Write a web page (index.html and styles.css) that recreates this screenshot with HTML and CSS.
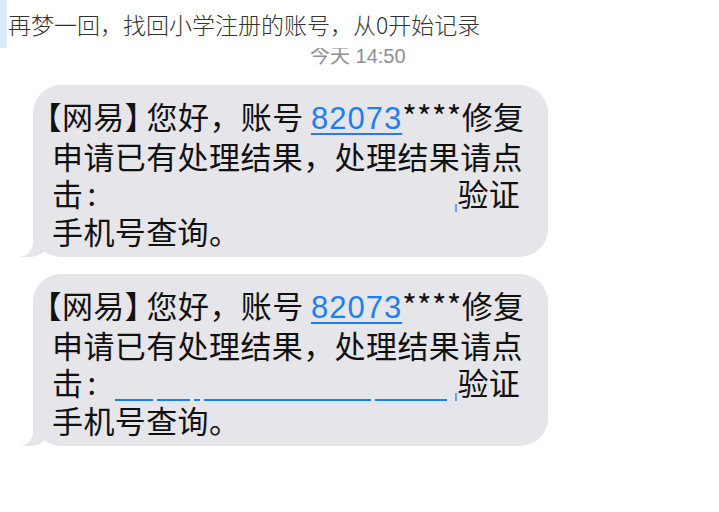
FILE: index.html
```html
<!DOCTYPE html>
<html lang="zh-CN">
<head>
    <meta charset="UTF-8">
    <meta name="viewport" content="width=device-width, initial-scale=1.0">
    <title>找回账号</title>
    <link rel="stylesheet" href="styles.css">
</head>
<body>

<div class="topbar">
    <span class="accent"></span>
    <p class="title">再梦一回，找回小学注册的账号，从0开始记录</p>
</div>

<div class="stamp">今天 14:50</div>

<div class="thread">
    <div class="bubble">
        <span class="brand">【网易】</span>您好，账号 <a class="link" href="#">82073</a>****修复<br>
        申请已有处理结果，处理结果请点<br>
        击<span class="colon">:</span><span class="blank"><span class="tick"></span></span>验证<br>
        手机号查询。
    </div>

    <div class="bubble">
        <span class="brand">【网易】</span>您好，账号 <a class="link" href="#">82073</a>****修复<br>
        申请已有处理结果，处理结果请点<br>
        击<span class="colon">:</span><span class="blank"><span class="seg" style="width:38px"></span><span class="seg" style="width:33px"></span><span class="seg" style="width:6px"></span><span class="seg" style="width:167px"></span><span class="seg" style="width:72px"></span><span class="tick"></span></span>验证<br>
        手机号查询。
    </div>
</div>

</body>
</html>
```

FILE: styles.css
```css
body {
    margin: 0;
    background-color: #fff;
    font-family: "Noto Sans CJK SC", "Noto Sans", sans-serif;
    color: #111;
}

.topbar {
    display: flex;
    align-items: center;
    height: 48px;
}

.accent {
    width: 7px;
    height: 48px;
    background-color: #dcebfb;
}

.title {
    margin: 0 0 0 1px;
    font-size: 23px;
    font-weight: 300;
    color: #333;
}

.stamp {
    height: 18px;
    overflow: hidden;
    padding-left: 310px;
    font-family: "Liberation Sans", "Noto Sans CJK SC", sans-serif;
    font-size: 20px;
    line-height: 16px;
    color: #8e8e93;
}

.thread {
    display: flex;
    flex-direction: column;
    gap: 17px;
    padding: 19px 0 0 33px;
}

.bubble {
    position: relative;
    width: 496px;
    padding: 12px 0 8px 19px;
    background-color: #e5e5ea;
    border-radius: 28px;
    font-size: 31px;
    letter-spacing: 0.4px;
    line-height: 37px;
}

/* tail */
.bubble::before {
    content: "";
    position: absolute;
    left: -13px;
    bottom: 0;
    width: 32px;
    height: 30px;
    background-color: #e5e5ea;
    border-bottom-right-radius: 22px;
}

.bubble::after {
    content: "";
    position: absolute;
    left: -18px;
    bottom: 0;
    width: 18px;
    height: 30px;
    background-color: #fff;
    border-bottom-right-radius: 14px;
}

.brand {
    font-feature-settings: "halt";
    margin: 0 6px 0 -6px;
}

.link {
    color: #1a7ff0;
    letter-spacing: 1px;
    text-decoration: underline;
    text-decoration-thickness: 2px;
    text-underline-offset: 4px;
    font-family: "Liberation Sans", sans-serif;
}

.colon {
    display: inline-block;
    width: 28px;
    padding-left: 4px;
}

.blank {
    display: inline-flex;
    align-items: flex-end;
    gap: 4px;
    width: 342px;
    height: 24px;
    vertical-align: -6px;
}

.tick {
    width: 2px;
    height: 8px;
    margin-left: auto;
    background-color: #5aa6f5;
}

.seg {
    height: 2px;
    background-color: #1a7ff0;
}
```
